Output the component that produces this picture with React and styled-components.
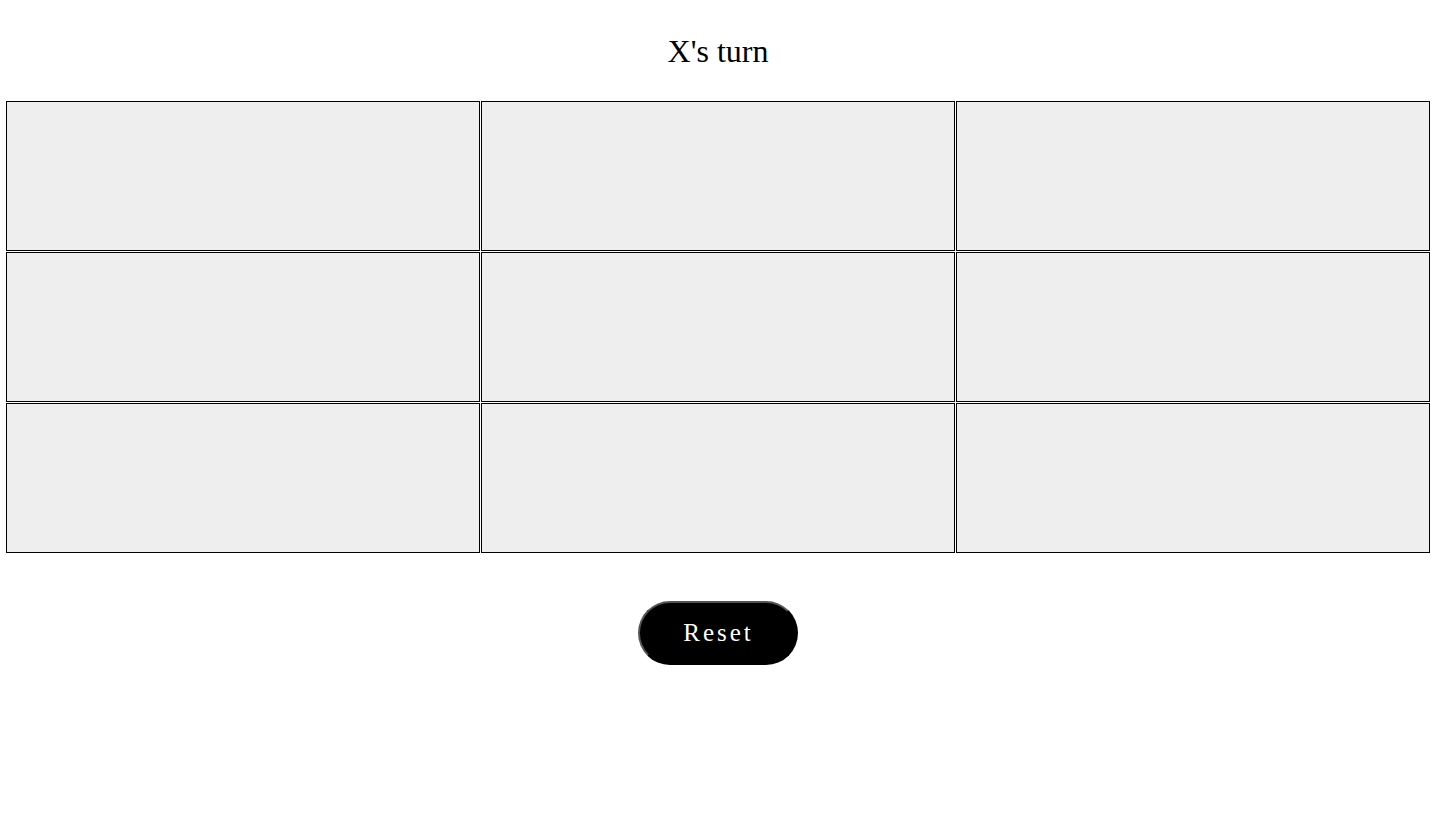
import React, { useState } from 'react';
import styled, { createGlobalStyle } from 'styled-components';

const GlobalStyle = createGlobalStyle`
    body {
        margin: 0;
        background: #ffffff;
        font-family: "Liberation Serif", "Times New Roman", serif;
    }
`;

const Page = styled.div`
    display: flex;
    flex-direction: column;
    align-items: center;
    padding: 0 8px 0 6px;
`;

const Status = styled.h1`
    margin: 0;
    padding-top: 33px;
    height: 101px;
    box-sizing: border-box;
    font-size: 32px;
    font-weight: normal;
    color: #000;
    line-height: 37px;
`;

const Board = styled.div`
    align-self: stretch;
    display: grid;
    grid-template-columns: repeat(3, 1fr);
    grid-auto-rows: 150px;
    gap: 1px;
`;

const Cell = styled.button`
    background-color: #eeeeee;
    border: 1px solid #000;
    margin: 0;
    padding: 0;
    font-family: "Liberation Serif", "Times New Roman", serif;
    font-size: 64px;
    cursor: pointer;
`;

const ResetButton = styled.button`
    margin-top: 48px;
    width: 160px;
    height: 64px;
    border-radius: 32px;
    border: 2px outset buttonborder;
    background-color: #000;
    color: #fff;
    font-family: "Liberation Serif", "Times New Roman", serif;
    font-size: 25px;
    letter-spacing: 3px;
    padding: 0 0 0 1px;
    cursor: pointer;
`;

function App() {
    const [squares, setSquares] = useState(Array(9).fill(null));
    const [xNext, setXNext] = useState(true);

    const play = (i) => {
        if (squares[i]) return;
        const next = squares.slice();
        next[i] = xNext ? 'X' : 'O';
        setSquares(next);
        setXNext(!xNext);
    };

    return (
        <>
            <GlobalStyle />
            <Page>
                <Status>{xNext ? 'X' : 'O'}'s turn</Status>
                <Board>
                    {squares.map((value, i) => (
                        <Cell key={i} onClick={() => play(i)}>
                            {value}
                        </Cell>
                    ))}
                </Board>
                <ResetButton
                    onClick={() => {
                        setSquares(Array(9).fill(null));
                        setXNext(true);
                    }}
                >
                    Reset
                </ResetButton>
            </Page>
        </>
    );
}

export default App;
